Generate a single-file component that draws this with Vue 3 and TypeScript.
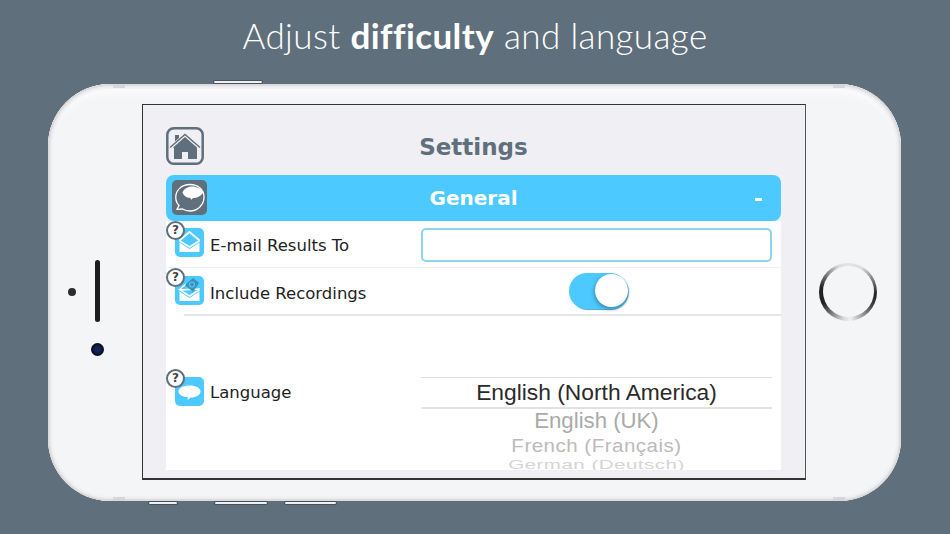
<template>
  <div class="page">
    <h1 class="headline">Adjust <b>difficulty</b> and language</h1>

    <div class="phone">
      <span class="side-btn top-btn"></span>
      <span class="side-btn low-btn b1"></span>
      <span class="side-btn low-btn b2"></span>
      <span class="side-btn low-btn b3"></span>
      <span class="band" v-for="b in bands" :key="b" :class="b"></span>

      <div class="bezel left">
        <span class="sensor"></span>
        <div class="speaker-col">
          <span class="speaker"></span>
          <span class="camera"></span>
        </div>
      </div>

      <div class="screen">
        <div class="title-row">
          <div class="home-btn">
            <svg viewBox="0 0 38 38" width="38" height="38">
              <rect x="1.300" y="1.300" width="35.400" height="35.400" rx="6.500" fill="none" stroke="#5f6f7b" stroke-width="2.500" />
              <path d="M4 20.500 19 7.500l15 13" fill="none" stroke="#5f6f7b" stroke-width="1.400" />
              <path d="M9 8h4v3l-4 3.500z" fill="#5f6f7b" />
              <path d="M7 20.500 19 10l12 10.500V32h-9v-7h-6v7H8v-11z" fill="#5f6f7b" />
            </svg>
          </div>
          <h2>Settings</h2>
        </div>

        <div class="section-bar">
          <div class="section-icon">
            <svg viewBox="0 0 35 35" width="35" height="35">
              <path d="M4 20c-1.500-9 5-15.500 14-15.500 8 0 14 5 14 12.500 0 8-6.500 14-14 14-3 0-5.500-.800-7.500-2l-5.500.300 2-3.800C5.500 24 4.500 22.500 4 20z" fill="none" stroke="#fff" stroke-width="1.300" />
              <path d="M10.500 12.500c1.500-3.500 5-6 9.500-6 5 0 9.500 2.200 11 6-1.500 3.500-6 5.500-10 5.500l-1.500 1.800-1.500-2c-3.500 0-6.500-2.300-7.500-5.300z" fill="#fff" />
            </svg>
          </div>
          <span class="section-name">General</span>
          <span class="section-toggle"></span>
        </div>

        <div class="panel">
          <div class="row first">
            <span class="help">?</span>
            <div class="row-icon">
              <svg viewBox="0 0 29 29" width="29" height="29">
                <path d="M5 12 14.500 4 24 12v1l-9.500 6L5 13z" fill="none" stroke="#fff" stroke-width="1.800" />
                <path d="M4.500 14.500 14.500 21l10-6.500V24h-20z" fill="#fff" />
              </svg>
            </div>
            <span class="row-label">E-mail Results To</span>
            <input class="text-box" type="text" />
          </div>

          <div class="row second">
            <span class="help">?</span>
            <div class="row-icon">
              <svg viewBox="0 0 29 29" width="29" height="29">
                <path d="M5 13 11 8M24 13v1l-9.500 6L5 14z" fill="none" stroke="#fff" stroke-width="1.500" />
                <path d="M4.500 15.500 14.500 22l10-6.500V25h-20z" fill="#fff" />
                <path d="m10 9 8-7 6 5-6 9z" fill="#3d8fb5" />
                <circle cx="17" cy="8.500" r="2.500" fill="none" stroke="#4ccaff" stroke-width="1.200" />
              </svg>
            </div>
            <span class="row-label">Include Recordings</span>
            <div class="switch-cell">
              <div class="switch"><span class="knob"></span></div>
            </div>
          </div>

          <div class="row language">
            <span class="help">?</span>
            <div class="row-icon">
              <svg viewBox="0 0 29 29" width="29" height="29">
                <path d="M3.500 14.500c0-3.500 4.500-6 11-6s11 2.500 11 6-4.500 6-10 6l-3 2.800.500-3c-5.500-.500-9.500-2.500-9.500-5.800z" fill="#fff" />
              </svg>
            </div>
            <span class="row-label">Language</span>
            <div class="picker">
              <div class="picked">English (North America)</div>
              <div class="opt opt1">English (UK)</div>
              <div class="opt opt2">French (Français)</div>
              <div class="opt opt3">German (Deutsch)</div>
            </div>
          </div>
        </div>
      </div>

      <div class="bezel right">
        <div class="home-ring"><span></span></div>
      </div>
    </div>
  </div>
</template>

<script setup lang="ts">
const bands: string[] = ['band-tl', 'band-tr', 'band-bl', 'band-br'];
</script>

<style>
html,
body {
  margin: 0;
  padding: 0;
}
</style>

<style scoped>
.page {
  width: 950px;
  height: 534px;
  overflow: hidden;
  background: #5f6f7b;
  box-sizing: border-box;
  display: flex;
  flex-direction: column;
  align-items: center;
}

.headline {
  height: 84px;
  margin: 0;
  padding-top: 14px;
  box-sizing: border-box;
  color: #fff;
  font-family: Lato, sans-serif;
  font-weight: 300;
  font-size: 35px;
  line-height: 42px;
  letter-spacing: 0.4px;
  white-space: nowrap;
}

.headline b {
  font-weight: 700;
}

.phone {
  position: relative;
  width: 853px;
  height: 417px;
  margin-left: -1px;
  box-sizing: border-box;
  padding: 20px 0 21px;
  display: flex;
  background: #f4f5f7;
  border-radius: 62px;
  box-shadow: inset 0 0 2px 2px #d8d8da, inset 0 0 0 5px #f2f2f4, inset 0 14px 6px -4px #fbfbfc;
}

.side-btn {
  position: absolute;
  background: #eef0f2;
  border-radius: 2px;
  box-shadow: 0 0 0 1px #46525c;
}

.top-btn {
  left: 166px;
  top: -3px;
  width: 48px;
  height: 2px;
}

.low-btn {
  bottom: -3px;
  height: 2px;
}

.b1 {
  left: 101px;
  width: 28px;
}

.b2 {
  left: 167px;
  width: 52px;
}

.b3 {
  left: 237px;
  width: 51px;
}

.band {
  position: absolute;
  width: 12px;
  height: 4px;
  background: #d6d6d8;
}

.band-tl {
  left: 65px;
  top: 0;
}

.band-tr {
  right: 56px;
  top: 0;
}

.band-bl {
  left: 65px;
  bottom: 0;
}

.band-br {
  right: 56px;
  bottom: 0;
}

.bezel {
  display: flex;
  flex: none;
}

.bezel.left {
  width: 94px;
  box-sizing: border-box;
  padding-left: 20px;
  align-items: center;
}

.sensor {
  width: 8px;
  height: 8px;
  border-radius: 50%;
  background: #2b2b2b;
  margin-right: 15px;
}

.speaker-col {
  align-self: flex-start;
  margin-top: 156px;
  display: flex;
  flex-direction: column;
  align-items: center;
  gap: 21px;
}

.speaker {
  width: 5px;
  height: 62px;
  border-radius: 2.500px;
  background: #1c1c1c;
}

.camera {
  width: 13px;
  height: 13px;
  border-radius: 50%;
  background: radial-gradient(circle, #16235a 0 25%, #070a14 70%);
}

.bezel.right {
  width: 95px;
  box-sizing: border-box;
  padding-left: 13px;
  align-items: center;
}

.home-ring {
  width: 58px;
  height: 58px;
  border-radius: 50%;
  margin-top: -1px;
  display: flex;
  align-items: center;
  justify-content: center;
  background: conic-gradient(#e4e4e6 0deg, #dcdcdc 30deg, #222 95deg, #444 120deg, #f0f0f0 175deg, #d8d8d8 190deg, #222 245deg, #222 280deg, #ddd 340deg, #e4e4e6 360deg);
}

.home-ring span {
  width: 51px;
  height: 51px;
  border-radius: 50%;
  background: #f4f5f7;
}

.screen {
  width: 664px;
  height: 376px;
  flex: none;
  box-sizing: border-box;
  border: 1px solid #333;
  border-bottom-width: 2px;
  border-right-color: #555;
  background: #efeff4;
  padding: 22px 24px 8px 23px;
  display: flex;
  flex-direction: column;
}

.title-row {
  height: 48px;
  flex: none;
  display: flex;
  align-items: flex-start;
  position: relative;
  justify-content: center;
}

.home-btn {
  position: absolute;
  left: 0;
  top: 0;
  width: 38px;
  height: 38px;
}

.title-row h2 {
  margin: 3px 0 0;
  font-family: 'DejaVu Sans', sans-serif;
  font-weight: 700;
  font-size: 23px;
  line-height: 34px;
  color: #5f6f7b;
}

.section-bar {
  height: 46px;
  flex: none;
  background: #4ccaff;
  border-radius: 8px;
  display: flex;
  align-items: center;
  justify-content: center;
  position: relative;
}

.section-icon {
  position: absolute;
  left: 6px;
  top: 5px;
  width: 35px;
  height: 35px;
  border-radius: 5px;
  background: #5f6f7b;
}

.section-name {
  font-family: 'DejaVu Sans', sans-serif;
  font-weight: 700;
  font-size: 20px;
  color: #fff;
}

.section-toggle {
  position: absolute;
  right: 19px;
  top: 23px;
  width: 7px;
  height: 3px;
  background: #fff;
}

.panel {
  flex: 1;
  min-height: 0;
  overflow: hidden;
  background: #fff;
  display: flex;
  flex-direction: column;
}

.row {
  position: relative;
  display: grid;
  grid-template-columns: 29px 205px 351px;
  column-gap: 6px;
  align-items: center;
  padding-left: 9px;
  box-sizing: border-box;
}

.row-icon {
  width: 29px;
  height: 29px;
  border-radius: 5px;
  background: #4ccaff;
  margin-bottom: 3px;
}

.row-label {
  font-family: 'DejaVu Sans', sans-serif;
  font-size: 16.500px;
  color: #222;
  white-space: nowrap;
  margin-top: 3px;
}

.help {
  position: absolute;
  left: 0;
  width: 19px;
  height: 19px;
  box-sizing: border-box;
  border: 2px solid #5f6f7b;
  border-radius: 50%;
  background: #fff;
  color: #444;
  font-family: 'DejaVu Sans', sans-serif;
  font-weight: 700;
  font-size: 12px;
  line-height: 15px;
  text-align: center;
  z-index: 1;
}

.row.first {
  height: 47px;
  flex: none;
  border-bottom: 1px solid #f2f2f2;
}

.row.first .help {
  top: 0;
}

.row.second {
  height: 47px;
  flex: none;
}

.row.second::after {
  content: '';
  position: absolute;
  left: 18px;
  right: 0;
  bottom: -1px;
  height: 2px;
  background: #e6e6e8;
}

.row.second .help {
  top: 0;
}

.text-box {
  height: 34px;
  width: 100%;
  box-sizing: border-box;
  border: 2px solid #8ad6ee;
  border-radius: 5px;
  background: #fff;
  outline: none;
  margin-top: 2px;
}

.switch-cell {
  display: flex;
  justify-content: center;
  margin-bottom: 2px;
}

.switch {
  width: 59px;
  height: 36px;
  border-radius: 18px;
  background: #4ccaff;
  display: flex;
  justify-content: flex-end;
  align-items: center;
  margin-left: 3px;
  box-shadow: 1px 1px 1px #4aa8cf;
}

.knob {
  width: 33px;
  height: 33px;
  border-radius: 50%;
  background: #fff;
  box-shadow: -1px 2px 4px rgba(0, 0, 0, 0.3);
}

.row.language {
  flex: 1;
  min-height: 0;
  align-items: start;
  padding-top: 62px;
}

.row.language .help {
  top: 54px;
}

.row.language .row-icon {
  margin: 0;
}

.row.language .row-label {
  margin-top: 6px;
}

.picker {
  text-align: center;
  font-family: 'Liberation Sans', sans-serif;
  white-space: nowrap;
}

.picked {
  height: 32px;
  box-sizing: border-box;
  border-top: 1px solid #ddd;
  border-bottom: 2px solid #e2e2e2;
  font-size: 22.800px;
  line-height: 29px;
  color: #2a2a2a;
}

.opt1 {
  height: 25px;
  font-size: 22.200px;
  line-height: 24px;
  color: #aaa;
}

.opt2 {
  height: 23px;
  font-size: 20.500px;
  line-height: 24px;
  letter-spacing: 0.5px;
  color: #bbb;
  transform: scaleY(0.92);
}

.opt3 {
  height: 20px;
  margin-top: -3px;
  font-size: 20.500px;
  line-height: 20px;
  letter-spacing: 0.5px;
  color: #d5d5d5;
  transform: scaleY(0.65);
}
</style>
